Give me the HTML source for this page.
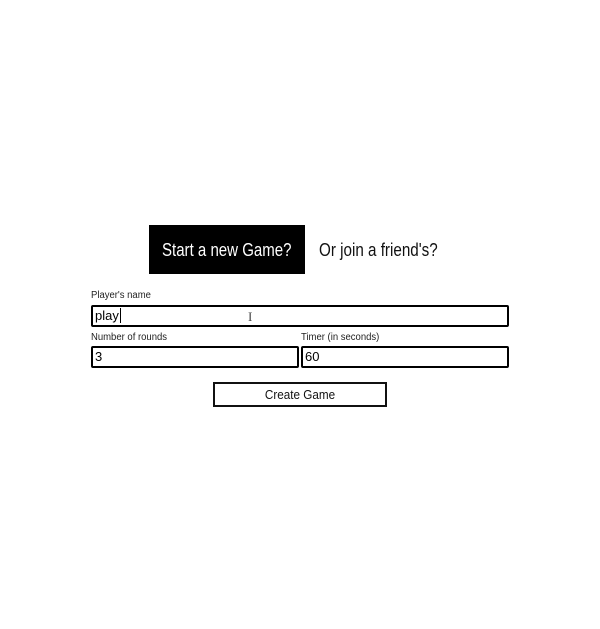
<!DOCTYPE html>
<html><head><style>
body{margin:0;width:600px;height:629px;background:#fff;font-family:"Liberation Sans Narrow","Liberation Sans",sans-serif;position:relative;overflow:hidden}
.a{position:absolute;box-sizing:border-box}
.box{border:2px solid #000;border-radius:2px;font-family:"Liberation Sans",sans-serif;font-size:13px;padding-left:2px;line-height:17px}
.lab{font-size:10px;color:#222;transform-origin:left;transform:scaleX(.95)}
</style></head><body>
<div class="a" style="left:149px;top:225px;width:156px;height:49px;background:#000"></div>
<div class="a" style="left:162px;top:240px;color:#fff;font-size:18px;white-space:nowrap;transform:scaleX(.835);transform-origin:left">Start a new Game?</div>
<div class="a" style="left:319px;top:240px;color:#111;font-size:18px;white-space:nowrap;transform:scaleX(.845);transform-origin:left">Or join a friend's?</div>
<div class="a lab" style="left:91px;top:290px">Player's name</div>
<div class="a box" style="left:91px;top:305px;width:418px;height:22px">play<span style="border-left:1px solid #000;margin-left:1px"></span></div>
<div class="a" style="left:248px;top:309px;font-size:13px;color:#444;font-family:'Liberation Serif',serif">I</div>
<div class="a lab" style="left:91px;top:332px">Number of rounds</div>
<div class="a lab" style="left:301px;top:332px">Timer (in seconds)</div>
<div class="a box" style="left:91px;top:346px;width:208px;height:22px">3</div>
<div class="a box" style="left:301px;top:346px;width:208px;height:22px">60</div>
<div class="a" style="left:213px;top:382px;width:174px;height:25px;border:2px solid #111;text-align:center;font-size:13px;line-height:21px;color:#111"><span style="display:inline-block;transform:scaleX(.9)">Create Game</span></div>
</body></html>
